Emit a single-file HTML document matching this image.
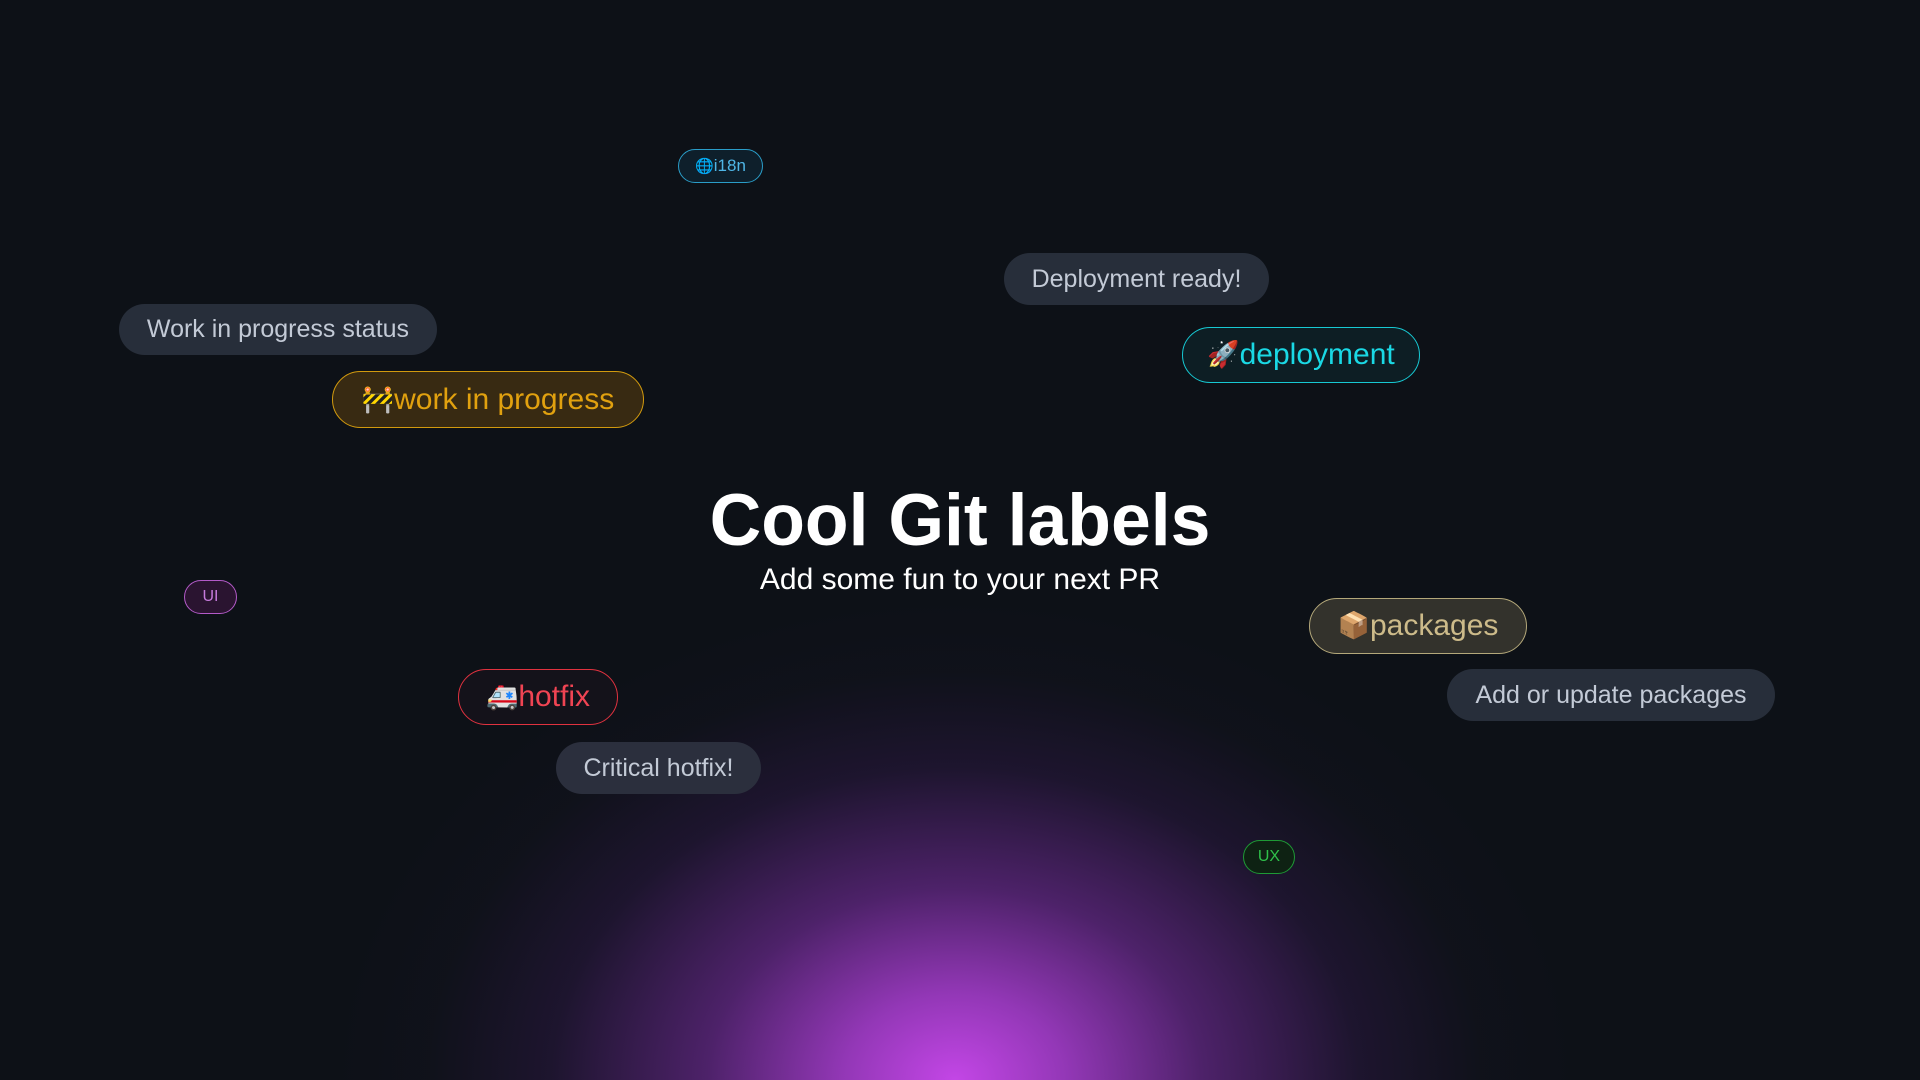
<!DOCTYPE html>
<html><head><meta charset="utf-8"><style>
html,body{margin:0;padding:0;width:1920px;height:1080px;overflow:hidden;background:#0d1117;font-family:"Liberation Sans","Noto Sans CJK SC",sans-serif;}
.glow{position:absolute;left:0;top:0;width:1920px;height:1080px;
background:radial-gradient(ellipse 620px 480px at 955px 1080px,rgba(195,70,230,1) 0%,rgba(170,62,210,0.85) 18%,rgba(120,45,160,0.6) 40%,rgba(60,28,90,0.35) 65%,rgba(30,20,45,0.15) 85%,rgba(13,17,23,0) 100%);}
.p{position:absolute;display:flex;align-items:center;justify-content:center;border-radius:999px;box-sizing:border-box;white-space:nowrap;}
.g{background:#272e3a;color:#c3cad6;font-size:25px;}
h1{position:absolute;left:0;width:1920px;top:476px;margin:0;text-align:center;color:#fff;font-size:73px;font-weight:bold;line-height:90px;transform:scaleX(0.98);}
.sub{position:absolute;left:0;width:1920px;top:562px;text-align:center;color:#fff;font-size:30px;line-height:36px;}
.e{font-family:"Noto Color Emoji","DejaVu Sans",sans-serif;}
</style></head><body>
<div class="glow"></div>
<div class="p" style="left:678px;top:149px;width:85px;height:34px;border:1.5px solid #2a9dc8;background:#0e1f2b;color:#4fb6e6;font-size:17px;"><span class="e" style="font-size:15px">🌐</span>i18n</div>
<div class="p g" style="left:119px;top:304px;width:318px;height:51px;">Work in progress status</div>
<div class="p" style="left:332px;top:371px;width:312px;height:57px;border:1.5px solid #d29a0e;background:#382a12;color:#e1a10f;font-size:30px;"><span class="e" style="font-size:26px">🚧</span>work in progress</div>
<div class="p g" style="left:1004px;top:253px;width:265px;height:52px;">Deployment ready!</div>
<div class="p" style="left:1182px;top:327px;width:238px;height:56px;border:1.5px solid #17c9d3;background:#0d1e24;color:#1ad8e4;font-size:30px;"><span class="e" style="font-size:26px">🚀</span>deployment</div>
<h1>Cool Git labels</h1>
<div class="sub">Add some fun to your next PR</div>
<div class="p" style="left:184px;top:580px;width:53px;height:34px;border:1.5px solid #b35ac8;background:#2a1430;color:#c57adb;font-size:16px;">UI</div>
<div class="p" style="left:1309px;top:598px;width:218px;height:56px;border:1.5px solid #b4a87a;background:#33322c;color:#cdbb8a;font-size:30px;"><span class="e" style="font-size:26px">📦</span>packages</div>
<div class="p g" style="left:1447px;top:669px;width:328px;height:52px;">Add or update packages</div>
<div class="p" style="left:458px;top:669px;width:160px;height:56px;border:1.5px solid #e0323f;background:#14121a;color:#f04453;font-size:30px;"><span class="e" style="font-size:26px">🚑</span>hotfix</div>
<div class="p g" style="left:556px;top:742px;width:205px;height:52px;background:#2b2f3d;">Critical hotfix!</div>
<div class="p" style="left:1243px;top:840px;width:52px;height:34px;border:1.5px solid #1e9a35;background:#0e2213;color:#2fc04a;font-size:16px;">UX</div>
</body></html>
